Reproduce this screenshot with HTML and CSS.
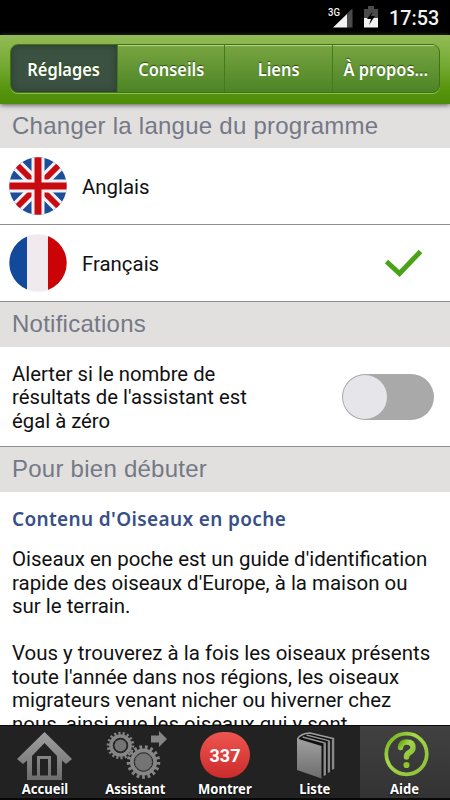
FILE: index.html
```html
<!DOCTYPE html>
<html lang="fr">
<head>
<meta charset="utf-8">
<title>Oiseaux en poche</title>
<link rel="stylesheet" href="styles.css">
</head>
<body>
<div class="app">
  <div class="status">
    <svg class="signal" width="26" height="24" viewBox="0 0 26 24">
      <path d="M19 8V21.500H5z" fill="#f2f2f2"/>
      <path d="M19 7.500l5.500-5V21.500H19z" fill="#4a4a4a"/>
      <text class="network" x="0" y="10" textLength="12" lengthAdjust="spacingAndGlyphs">3G</text>
    </svg>
    <svg class="battery" width="14" height="22" viewBox="0 0 14 22">
      <path d="M0 3h4V0h6v3h4v9H0z" fill="#4a4a4a"/>
      <path d="M0 12h14v9.500H0z" fill="#f2f2f2"/>
      <path d="M9 5 3 13h4l-2 6 6-9H7z" fill="#000"/>
    </svg>
    <span class="clock">17:53</span>
  </div>
  <header class="header">
    <nav class="segments">
      <a class="segment active"><span>Réglages</span></a>
      <a class="segment"><span>Conseils</span></a>
      <a class="segment"><span>Liens</span></a>
      <a class="segment"><span>À propos...</span></a>
    </nav>
  </header>
  <main class="content">
    <h2 class="section first">Changer la langue du programme</h2>
    <div class="row">
      <svg class="flag" width="58" height="58" viewBox="0 0 58 58">
        <defs><clipPath id="round"><circle cx="29" cy="29" r="28.700"/></clipPath></defs>
        <g clip-path="url(#round)">
          <path fill="#1b4e98" d="M0 0h58v58H0z"/>
          <path stroke="#f5f1f5" stroke-width="12" d="M3 3 55 55M55 3 3 55"/>
          <path stroke="#c80b10" stroke-width="6" d="M3 3 55 55M55 3 3 55"/>
          <path stroke="#f5f1f5" stroke-width="13" d="M29 0v58M0 29h58"/>
          <path stroke="#c80b10" stroke-width="7" d="M29 0v58M0 29h58"/>
        </g>
      </svg>
      <span class="label">Anglais</span>
    </div>
    <div class="row">
      <svg class="flag" width="58" height="58" viewBox="0 0 58 58">
        <g clip-path="url(#round)">
          <path fill="#f0eaee" d="M0 0h58v58H0z"/>
          <path fill="#12499a" d="M0 0h18v58H0z"/>
          <path fill="#cb0306" d="M39 0h19v58H39z"/>
        </g>
      </svg>
      <span class="label">Français</span>
      <svg class="check" width="40" height="30" viewBox="0 0 40 30">
        <path d="M2.500 13.500 15.500 25.500 36.500 3.500" fill="none" stroke="#48a416" stroke-width="5"/>
      </svg>
    </div>
    <h2 class="section">Notifications</h2>
    <div class="option">
      <p>Alerter si le nombre de<br>résultats de l'assistant est<br>égal à zéro</p>
      <span class="switch"><span class="knob"></span></span>
    </div>
    <h2 class="section">Pour bien débuter</h2>
    <article class="article">
      <h3>Contenu d'Oiseaux en poche</h3>
      <p>Oiseaux en poche est un guide d'identification<br>rapide des oiseaux d'Europe, à la maison ou<br>sur le terrain.</p>
      <p>Vous y trouverez à la fois les oiseaux présents<br>toute l'année dans nos régions, les oiseaux<br>migrateurs venant nicher ou hiverner chez<br>nous, ainsi que les oiseaux qui y sont</p>
    </article>
  </main>
  <footer class="tabs">
    <a class="tab">
      <svg width="90" height="75" viewBox="0 0 90 75">
        <defs><linearGradient id="metal" x1="0" y1="0" x2="0" y2="1"><stop stop-color="#a0a0a0"/><stop offset="1" stop-color="#6d6d6d"/></linearGradient></defs>
        <path fill="url(#metal)" fill-rule="evenodd" d="M44.500 6 72 33l-6 5-4-3.500V54H27V34.500L23 38l-6-5zM44.500 17 32 30v19.500h5V30h14v19.500h6V30zM40 33v16.500h8V33z"/>
      </svg>
      <span class="name">Accueil</span>
    </a>
    <a class="tab">
      <svg width="90" height="75" viewBox="0 0 90 75">
        <g fill="none" stroke="#858585">
          <circle cx="30.500" cy="19.500" r="9.300" stroke-width="4"/>
          <circle cx="30.500" cy="19.500" r="12.300" stroke-width="3" pathLength="36" stroke-dasharray="1 1"/>
          <circle cx="53.500" cy="36" r="11" stroke-width="5"/>
          <circle cx="53.500" cy="36" r="14.800" stroke-width="4" pathLength="34" stroke-dasharray="1 1"/>
        </g>
        <circle cx="30.500" cy="19.500" r="6" fill="#747474"/>
        <circle cx="53.500" cy="36" r="8.500" fill="#747474"/>
        <g fill="none" stroke="#252525"><circle cx="30.500" cy="19.500" r="7.300"/><circle cx="53.500" cy="36" r="9.300"/></g>
        <path fill="#858585" d="M61 9.500h8V5l8 8-8 8v-4.500h-8z"/>
      </svg>
      <span class="name">Assistant</span>
    </a>
    <a class="tab">
      <span class="count">337</span>
      <span class="name">Montrer</span>
    </a>
    <a class="tab">
      <svg width="90" height="75" viewBox="0 0 90 75">
        <path d="M27 13Q30 7 40 6.500L64.500 12.500V43.500L52 50 28 40z" fill="#101010"/>
        <path fill="url(#metal)" d="M27 12.500 51.500 20V52.500L27 44z"/>
        <path d="M27.500 13Q30.500 7.500 40 7L64 12.800" fill="none" stroke="#a0a0a0" stroke-width="1.600"/>
        <path d="M32.500 11 55 17M36.500 9 59.500 14.800" fill="none" stroke="#929292" stroke-width="1.300"/>
        <path d="M53.500 17.500 56 16.500V49L53.500 50zM57.700 15.500l2.500-1V46l-2.500 1zM61.800 13.500l2.500-1V43l-2.500 1z" fill="#8a8a8a"/>
      </svg>
      <span class="name">Liste</span>
    </a>
    <a class="tab selected">
      <svg width="90" height="75" viewBox="0 0 90 75">
        <defs><linearGradient id="lime" x1="0" y1="0" x2="1" y2="1"><stop stop-color="#69a912"/><stop offset=".35" stop-color="#a5d84a"/><stop offset="1" stop-color="#8cbd38"/></linearGradient></defs>
        <circle cx="46.500" cy="28" r="20.300" fill="none" stroke="url(#lime)" stroke-width="3.700"/>
        <path d="M40.500 21.500q.5-5.500 6-5.500 6.500 0 6.500 5.500 0 3-3.500 5-3 1.700-3 4.500" fill="none" stroke="url(#lime)" stroke-width="5.500" stroke-linecap="round"/>
        <circle cx="46.500" cy="39" r="3.100" fill="#8fc52d"/>
      </svg>
      <span class="name">Aide</span>
    </a>
  </footer>
</div>
</body>
</html>
```
FILE: styles.css
```css
* { box-sizing: border-box; }
body { margin: 0; background: #fff; }
h2, h3, p { margin: 0; font-weight: 400; }
.app {
  width: 450px;
  height: 800px;
  display: flex;
  flex-direction: column;
  overflow: hidden;
  font-family: Roboto, sans-serif;
  color: #111;
}
.status {
  height: 35px;
  flex: none;
  background: #000;
  color: #f2f2f2;
  display: flex;
  align-items: flex-start;
  justify-content: flex-end;
  padding: 6px 11px 0 0;
}
.signal { margin-right: 10px; }
.network { font: 500 11px Roboto, sans-serif; fill: #f2f2f2; }
.battery { margin-right: 11px; }
.clock { font-size: 19.800px; font-weight: 500; line-height: 26px; width: 50px; }
.header {
  height: 69px;
  flex: none;
  padding: 9px 10px 0;
  background: linear-gradient(#93bb56, #75a932 45%, #56940c 80%, #4c8d08);
  box-shadow: 0 1px 5px #555;
  z-index: 1;
}
.segments {
  height: 49px;
  display: grid;
  grid-template-columns: 107px 107px 108px 1fr;
  border: 1px solid #3d7415;
  border-radius: 8px;
  overflow: hidden;
  box-shadow: 0 1px 0 #8fbd50;
  background: linear-gradient(#79a541, #4c8425);
}
.segment {
  display: flex;
  align-items: center;
  justify-content: center;
  color: #fff;
  font: 600 17px/24px "Noto Sans", sans-serif;
  white-space: nowrap;
  text-shadow: 0 -1px 1px #29510f;
  border-right: 1px solid #427b1e;
  box-shadow: inset 0 2px 1px -1px #b7d58c;
  padding-top: 2px;
}
.segment:last-child { border-right: 0; }
.segment span { flex: none; transform: scaleX(.965); }
.segment.active { background: #3b5141; box-shadow: inset 0 0 7px #263b2c; }
.content { flex: 1; min-height: 0; overflow: hidden; background: #fff; }
.section {
  height: 45px;
  padding-left: 12px;
  background: #e2e0de;
  color: #747887;
  font: 400 24px/43px "Liberation Sans", sans-serif;
  letter-spacing: .25px;
  white-space: nowrap;
}
.section.first { height: 44px; }
.row {
  height: 77px;
  display: flex;
  align-items: center;
  padding: 0 26px 0 9px;
  border-bottom: 1px solid #8e8e8c;
  font-size: 20.400px;
}
.flag { margin-right: 15px; }
.label { flex: 1; padding-top: 2px; }
.option {
  height: 100px;
  display: flex;
  align-items: center;
  justify-content: space-between;
  padding: 1px 16px 0 12px;
  border-bottom: 1px solid #8e8e8c;
  font-size: 20.300px;
  line-height: 23.500px;
}
.option p { padding-top: 2px; }
.switch { width: 92px; height: 46px; border-radius: 23px; background: #aaa9aa; padding: 1px; }
.knob { display: block; width: 44px; height: 44px; border-radius: 50%; background: #e5e5ea; }
.article { padding: 13px 12px 0; font-size: 20.450px; line-height: 23.500px; white-space: nowrap; }
.article h3 { color: #385086; font: 600 19px/28px "Noto Sans", sans-serif; letter-spacing: .36px; margin-bottom: 15px; }
.article p { margin-bottom: 23.500px; }
.tabs {
  height: 75px;
  flex: none;
  display: grid;
  grid-template-columns: repeat(5, 90px);
  background: #222;
  border-top: 1px solid #0c0c0c;
  border-bottom: 2px solid #080808;
}
.tab { display: grid; grid-template-rows: 72px; grid-template-columns: 90px; justify-items: center; }
.tab > * { grid-area: 1 / 1; }
.tab.selected { background: linear-gradient(#414141, #333); }
.name {
  align-self: end;
  color: #fff;
  font: 700 14px/20px "Noto Sans", sans-serif;
  text-shadow: 0 1px 2px #000;
  margin-bottom: -1px;
  transform: scaleX(.93);
}
.count {
  width: 50px;
  height: 46px;
  margin-top: 6px;
  border-radius: 23px;
  background: linear-gradient(#ee5550, #cb2c2b);
  color: #fff;
  text-align: center;
  font: 700 18px/48px Roboto, sans-serif;
}
```
